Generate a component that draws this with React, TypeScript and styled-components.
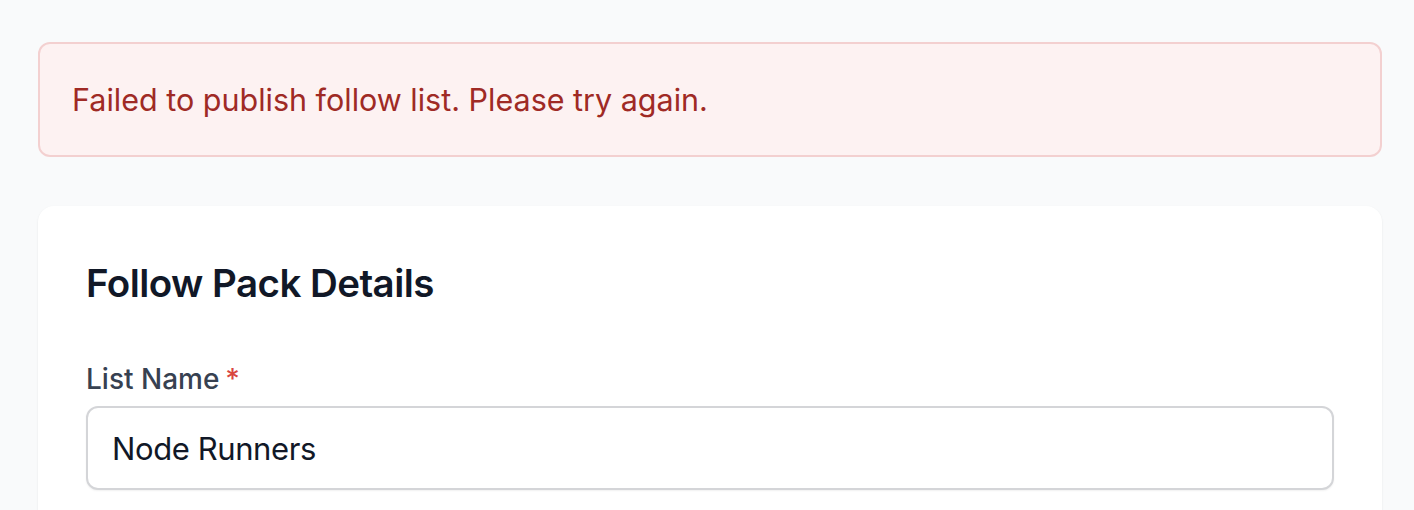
import React from "react";
import styled, { createGlobalStyle } from "styled-components";

const GlobalStyle = createGlobalStyle`
  html, body {
    margin: 0;
    padding: 0;
    background: #f9fafb;
    font-family: Inter, "Noto Sans", "Liberation Sans", sans-serif;
    -webkit-font-smoothing: antialiased;
  }
  * { box-sizing: border-box; }
`;

const Page = styled.main`
  padding: 42px 32px 0 38px;
  display: flex;
  flex-direction: column;
  gap: 49px;
  width: 1414px;
  height: 510px;
  overflow: hidden;
`;

const Alert = styled.div`
  background: #fdf2f2;
  border: 2px solid #f3d0d0;
  border-radius: 12px;
  padding: 36px 32px 35px 32px;
  color: #9f2a25;
  font-size: 30.5px;
  line-height: 40px;
`;

const Card = styled.section`
  background: #ffffff;
  border-radius: 16px;
  box-shadow: 0 1px 3px rgba(0, 0, 0, 0.05), 0 1px 2px rgba(0, 0, 0, 0.03);
  padding: 49px 48px 48px 48px;
  flex: 1;
`;

const Heading = styled.h2`
  margin: 0 0 48px 0;
  font-size: 38.5px;
  line-height: 56px;
  font-weight: 600;
  color: #111827;
  letter-spacing: -0.55px;
`;

const Field = styled.div`
  display: flex;
  flex-direction: column;
  gap: 7px;
`;

const Label = styled.label`
  font-size: 28px;
  line-height: 40px;
  font-weight: 500;
  color: #374151;
`;

const Required = styled.span`
  color: #d9463f;
  margin-left: 6px;
`;

const Input = styled.input`
  width: 100%;
  height: 84px;
  border: 2px solid #d4d5d8;
  border-radius: 12px;
  padding: 0 24px;
  font-family: inherit;
  font-size: 31px;
  letter-spacing: -0.4px;
  color: #111827;
  background: #fff;
  box-shadow: 0 1px 2px rgba(0, 0, 0, 0.06);
  outline: none;
`;

export default function App() {
  return (
    <>
      <GlobalStyle />
      <Page>
        <Alert>Failed to publish follow list. Please try again.</Alert>
        <Card>
          <Heading>Follow Pack Details</Heading>
          <Field>
            <Label>
              List Name<Required>*</Required>
            </Label>
            <Input defaultValue="Node Runners" readOnly />
          </Field>
        </Card>
      </Page>
    </>
  );
}
